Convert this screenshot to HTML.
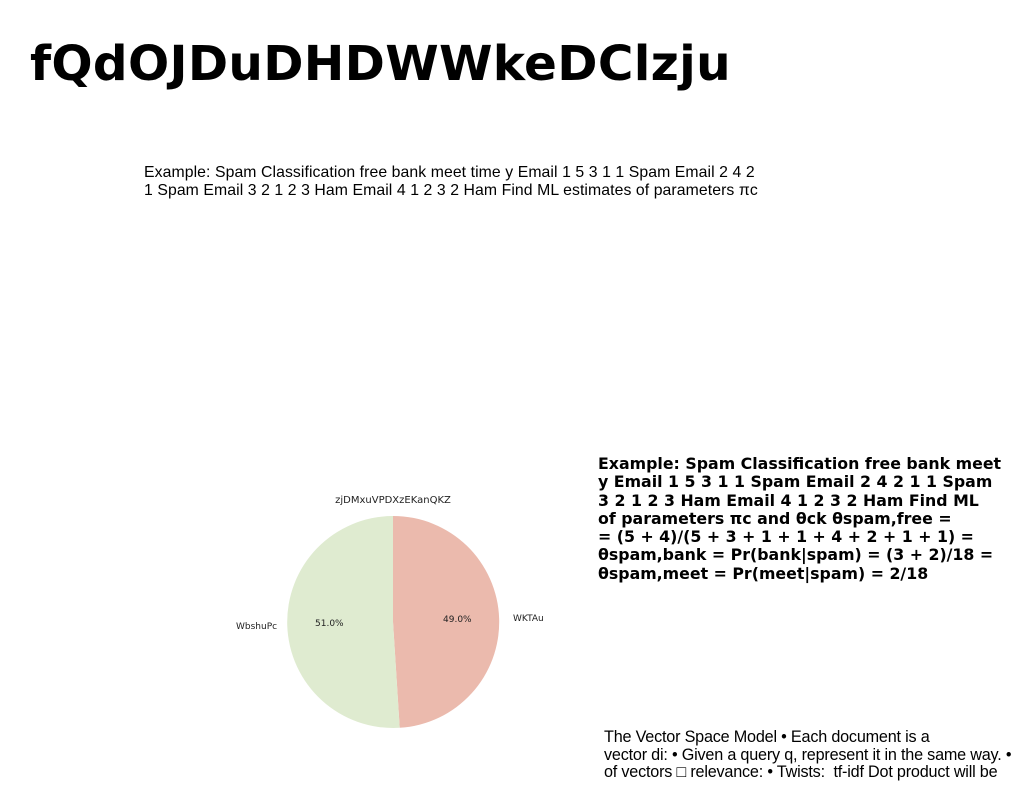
<!DOCTYPE html>
<html><head><meta charset="utf-8"><style>
body{margin:0;width:1024px;height:788px;background:#fff;position:relative;overflow:hidden;font-family:"Liberation Sans",sans-serif;color:#000}
.t{position:absolute;left:30px;top:36px;font:bold 48.5px "DejaVu Sans",sans-serif;white-space:nowrap;letter-spacing:0.3px}
.p1{position:absolute;left:144px;top:164px;font-size:15.8px;line-height:18px;white-space:nowrap;letter-spacing:0.08px}
.p2{position:absolute;left:598px;top:455px;font:bold 15.8px "DejaVu Sans",sans-serif;line-height:18.3px;white-space:nowrap}
.p3{position:absolute;left:604px;top:729px;font-size:16.2px;line-height:17.6px;white-space:nowrap;letter-spacing:-0.2px}
svg{position:absolute;left:0;top:0}
</style></head><body>
<div class="t">fQdOJDuDHDWWkeDClzju</div>
<div class="p1">Example: Spam Classification free bank meet time y Email 1 5 3 1 1 Spam Email 2 4 2<br>1 Spam Email 3 2 1 2 3 Ham Email 4 1 2 3 2 Ham Find ML estimates of parameters πc</div>
<svg width="1024" height="788">
<path d="M393,622 L393,516 A106,106 0 0 1 399.7,727.8 Z" fill="#ebbaad"/>
<path d="M393,622 L399.7,727.8 A106,106 0 1 1 393,516 Z" fill="#dfebd0"/>
<g font-family="DejaVu Sans,sans-serif" font-size="9" fill="#222">
<text x="393" y="503" text-anchor="middle" font-size="10">zjDMxuVPDXzEKanQKZ</text>
<text x="236" y="629">WbshuPc</text>
<text x="315" y="626">51.0%</text>
<text x="443" y="622">49.0%</text>
<text x="513" y="621">WKTAu</text>
</g>
</svg>
<div class="p2">Example: Spam Classification free bank meet<br>y Email 1 5 3 1 1 Spam Email 2 4 2 1 1 Spam<br>3 2 1 2 3 Ham Email 4 1 2 3 2 Ham Find ML<br>of parameters πc and θck θspam,free =<br>= (5 + 4)/(5 + 3 + 1 + 1 + 4 + 2 + 1 + 1) =<br>θspam,bank = Pr(bank|spam) = (3 + 2)/18 =<br>θspam,meet = Pr(meet|spam) = 2/18</div>
<div class="p3">The Vector Space Model • Each document is a<br>vector di: • Given a query q, represent it in the same way. •<br>of vectors □ relevance: • Twists:&nbsp; tf-idf Dot product will be</div>
</body></html>
